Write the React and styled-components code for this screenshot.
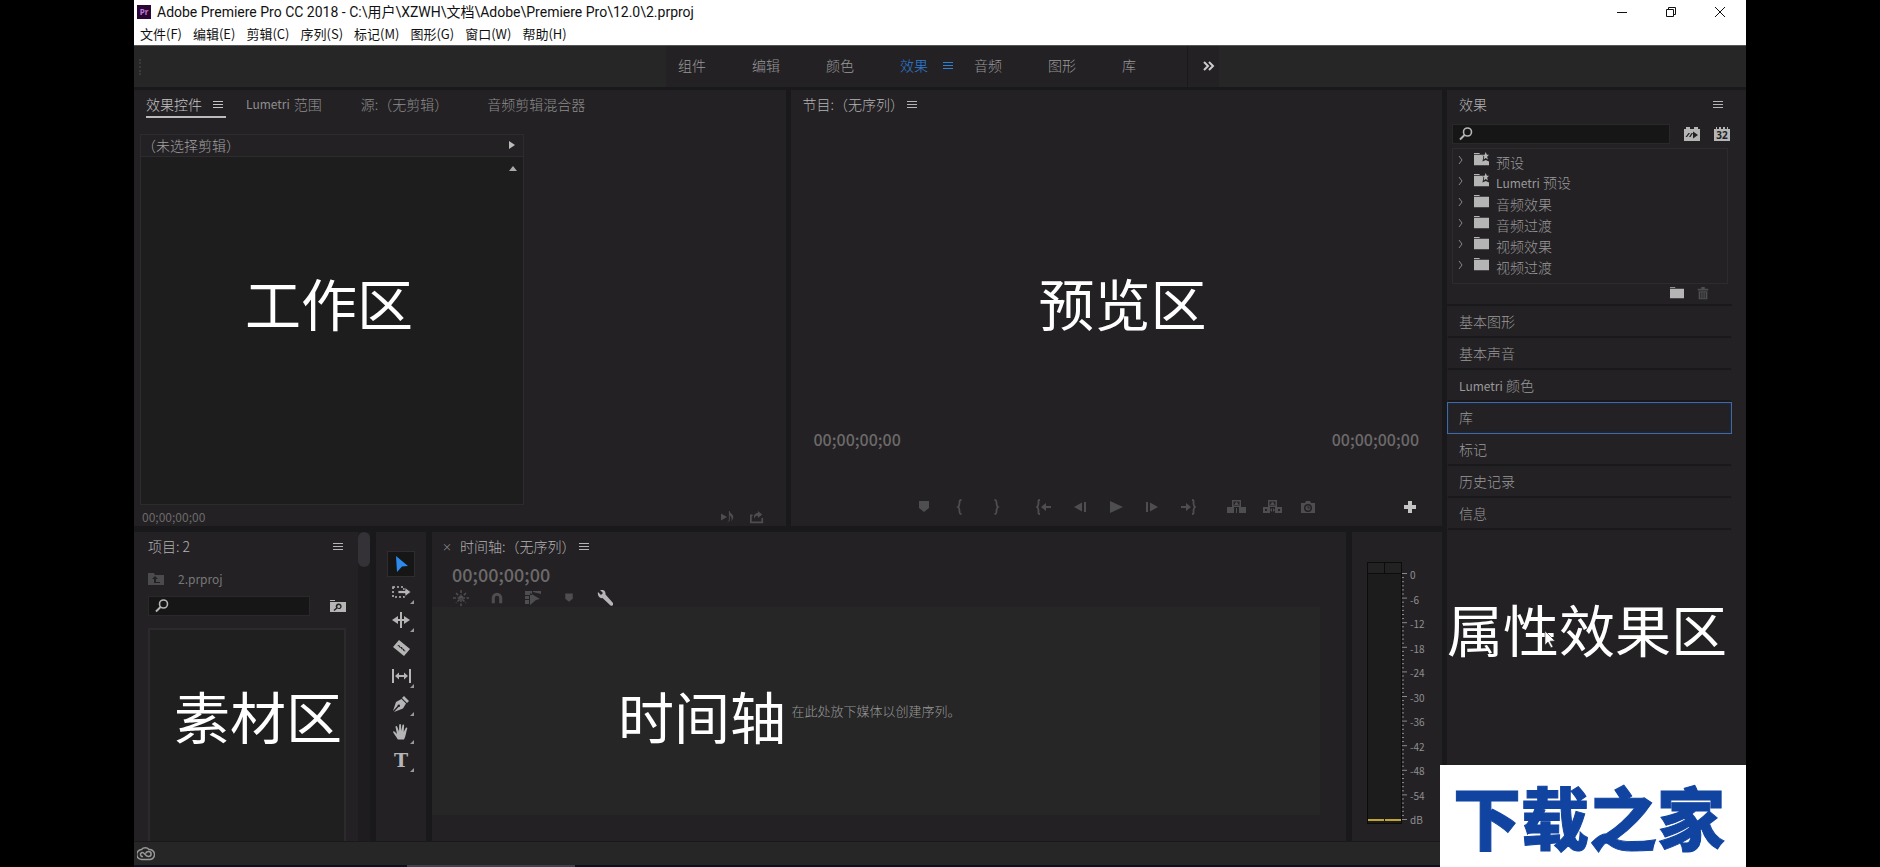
import { useState } from "react";
import styled, { createGlobalStyle } from "styled-components";

const menus = ["文件(F)", "编辑(E)", "剪辑(C)", "序列(S)", "标记(M)", "图形(G)", "窗口(W)", "帮助(H)"];
const workspaces = ["组件", "编辑", "颜色", "效果", "音频", "图形", "库"];
const bins = [
  { name: "预设", preset: true },
  { name: "预设", latin: "Lumetri", preset: true },
  { name: "音频效果" },
  { name: "音频过渡" },
  { name: "视频效果" },
  { name: "视频过渡" },
];
const sections = [
  { name: "基本图形" },
  { name: "基本声音" },
  { name: "颜色", latin: "Lumetri" },
  { name: "库" },
  { name: "标记" },
  { name: "历史记录" },
  { name: "信息" },
];
const levels = ["0", "-6", "-12", "-18", "-24", "-30", "-36", "-42", "-48", "-54", "dB"];

// 16x16 drawings, filled with currentColor
const shapes = {
  menu: <path d="M3 5h10v1H3zM3 8h10v1H3zM3 11h10v1H3z" />,
  search: (
    <g fill="none" stroke="currentColor">
      <circle cx="9.5" cy="6" r="4" strokeWidth="1.6" />
      <path d="M6.5 9L2 13.500" strokeWidth="2" />
    </g>
  ),
  folder: <path d="M0 1h6v1H0zM0 3h16v11H0z" />,
  presetFolder: (
    <>
      <path d="M0 1h6v1H0zM0 3h9l1 2-1 5 3.500-1.500L16 10v4H0z" />
      <path d="M12.500 0l1.200 3H16l-2 2 .8 3-2.300-1.600L10.200 8 11 5 9 3h2.300z" />
    </>
  ),
  folderUp: (
    <path fillRule="evenodd" d="M0 2h6l1 2h9v10H0zM7 5L4 8h2v4h6v-1H8V8h2z" />
  ),
  folderSearch: (
    <path fillRule="evenodd" d="M0 2h5v1H0zM0 4h16v10H0zM8.500 5.500a2.800 2.800 0 0 0-2.400 4.300L3.500 12l1 1 2.800-2.400A2.800 2.800 0 1 0 8.500 5.500zm.3 1.400a1.500 1.500 0 1 1 0 3 1.500 1.500 0 0 1 0-3z" />
  ),
  trash: <path fillRule="evenodd" d="M2 3h4V1h4v2h4v2H2zM3 6h10v9H3zM5 7v7h1V7zM7.500 7v7h1V7zM10 7v7h1V7z" />,
  accel: (
    <path fillRule="evenodd" d="M0 3h2V1h4v2h4V1h4v2h2v12H0zM4.500 7L1.500 11h1.500l3-4zM7.500 7L5 11h1.500l2.500-4zM9 5.500v7l5-3.500z" />
  ),
  marker: <path d="M3 2h10v7l-5 4-5-4z" />,
  inPoint: <path d="M9.500 1C7.500 1 7.500 2 7.500 4s0 3-1.500 4c1.500 1 1.500 2 1.500 4s0 3 2 3" fill="none" stroke="currentColor" strokeWidth="1.800" />,
  outPoint: <path d="M6.500 1c2 0 2 1 2 3s0 3 1.500 4c-1.500 1-1.500 2-1.500 4s0 3-2 3" fill="none" stroke="currentColor" strokeWidth="1.800" />,
  goIn: (
    <>
      <path d="M4 1C2 1 2.500 2 2.500 4s0 3-1.500 4c1.500 1 1.500 2 1.500 4s-.5 3 1.500 3" fill="none" stroke="currentColor" strokeWidth="1.800" />
      <path d="M5 8l5-4v3h5v2h-5v3z" />
    </>
  ),
  goOut: (
    <>
      <path d="M12 1c2 0 1.500 1 1.500 3s0 3 1.500 4c-1.500 1-1.500 2-1.500 4s.5 3-1.500 3" fill="none" stroke="currentColor" strokeWidth="1.800" />
      <path d="M11 8L6 4v3H1v2h5v3z" />
    </>
  ),
  stepBack: <path d="M2 8l8-4.500v9zM12 3h2v10h-2z" />,
  play: <path d="M2 2l13 6-13 6z" />,
  stepOn: <path d="M14 8L6 3.500v9zM2 3h2v10H2z" />,
  lift: (
    <path fillRule="evenodd" d="M5 1h9v7H5zM6.500 2.500v4h6v-4zM9 3h1l2 3H7zM0 8h7v6H0zM12 8h7v6h-7zM9 9h1v5H9z" />
  ),
  extract: (
    <path fillRule="evenodd" d="M5 1h9v7H5zM6.500 2.500v4h6v-4zM9 3h1l2 3H7zM0 8h7v6H0zM2 10v2h2v-2zM12 8h7v6h-7zM15 10v2h2v-2zM7 11l2-2v4zM12 11l-2-2v4z" />
  ),
  camera: (
    <path fillRule="evenodd" d="M1 4h4l1-2h4l1 2h4v10H1zM8 5a4 4 0 1 0 0 8 4 4 0 0 0 0-8zm0 1.500a2.500 2.500 0 1 1 0 5 2.500 2.500 0 0 1 0-5zM7.500 7v2.500H10V8.500H8.500V7z" />
  ),
  plus: <path d="M6 2h4v4h4v4h-4v4H6v-4H2V6h4z" />,
  playAudio: (
    <>
      <path d="M0 4l7 4-7 4z" />
      <path d="M10 1c0 3 4 3 4 7 0 2-2 5-2 5 1-4-1-6-2-7v6c-1 2-3 2-3 2 1-1 2-1 2-3V1z" />
    </>
  ),
  exportIt: (
    <path fillRule="evenodd" d="M0 5h3v2H2v6h11V9h2v6H0zM9 1l5 4-5 4V6.500C7 6.500 5.500 7 5 10 3.500 6 6 3.500 9 3.500z" />
  ),
  select: <path d="M3 0l12 10-6 .5L4 16z" />,
  track: (
    <>
      <path d="M1 3h11v10H1z" fill="none" stroke="currentColor" strokeWidth="1.600" strokeDasharray="2 2" />
      <path d="M6 6.500h7V3.500l6 4.500-6 4.500v-3H6z" stroke="#232124" strokeWidth=".8" />
    </>
  ),
  ripple: <path d="M8 0h2v16H8zM0 8l6-4v3h2v2H6v3zM18 8l-6-4v3h-2v2h2v3z" />,
  razor: (
    <path fillRule="evenodd" d="M6 0l11 9-6 7-11-9zM5 5l1.500.5 1 1.500 1.500 0 .5 1.500 1.500.500.500 1.500 1 .3-.3.700-1.700-.500-.6-1.500-1.400-.3-.6-1.400-1.400-.200-.7-1.400L4.500 6z" />
  ),
  slip: <path d="M0 1h2v14H0zM17 1h2v14h-2zM3 8l4-3.500V7h5V4.500L16 8l-4 3.500V9H7v2.500z" />,
  pen: (
    <path fillRule="evenodd" d="M11 0l5 5-2 2-5-5zM8.500 3L13 7.500l-3 5L1 16l4.500-5a1.300 1.300 0 1 0-1-1L0 15l3-9z" />
  ),
  hand: (
    <path d="M4.500 15C3 12 1 10 0 8c0-1 1.300-1 2 0l2 2-1.500-7c0-1.200 1.500-1.200 1.800 0L6 7.500 6.200 1c.1-1.200 1.700-1.200 1.800 0l.4 6 1-5.700c.3-1.100 1.800-.8 1.700.4L10.700 8l2-4c.6-1 1.900-.4 1.500.7C13 8 13 12 11 15.500H5z" />
  ),
  nest: (
    <path d="M8 0v16M0 8h16M3 3l10 10M13 3L3 13" fill="none" stroke="currentColor" strokeWidth="1.500" strokeDasharray="3 1.500" />
  ),
  magnet: <path d="M2 14V8a6 6 0 0 1 12 0v6h-3.500V8a2.500 2.500 0 0 0-5 0v6z" />,
  linked: <path fillRule="evenodd" d="M0 1h7v4H0zM0 6h4v3H0zM0 10h4v4H0zM8 1h8v3L8 2zM5 3l10 6-4 1-6 5z" />,
  wrench: (
    <path d="M1 2l3 3 2-2-3-3c3-1 6 1 5.500 4.500L16 13c1 2-1 4-3 2L5.500 8C3 9 0 6 1 2z" />
  ),
};

const Icon = ({ name, size = 16, width }) => (
  <svg
    width={width || size}
    height={size}
    viewBox={`0 0 ${width && width > 16 ? width : 16} 16`}
    fill="currentColor"
    aria-hidden="true"
  >
    {shapes[name]}
  </svg>
);

const transport = [
  { icon: "marker", label: "添加标记" },
  { icon: "inPoint", label: "标记入点" },
  { icon: "outPoint", label: "标记出点" },
  { icon: "goIn", label: "转到入点", group: true },
  { icon: "stepBack", label: "后退一帧" },
  { icon: "play", label: "播放" },
  { icon: "stepOn", label: "前进一帧" },
  { icon: "goOut", label: "转到出点" },
  { icon: "lift", label: "提升", w: 19, group: true },
  { icon: "extract", label: "提取", w: 19 },
  { icon: "camera", label: "导出帧" },
];

const tools = [
  { icon: "select", label: "选择工具" },
  { icon: "track", label: "向前选择轨道工具", w: 19, more: true },
  { icon: "ripple", label: "波纹编辑工具", w: 18, more: true },
  { icon: "razor", label: "剃刀工具", w: 17 },
  { icon: "slip", label: "外滑工具", w: 19, more: true },
  { icon: "pen", label: "钢笔工具", more: true },
  { icon: "hand", label: "手形工具", more: true },
  { icon: "type", label: "文字工具", more: true },
];

const App = () => {
  const [workspace, setWorkspace] = useState("效果");
  const [section, setSection] = useState("库");
  const [tool, setTool] = useState("select");

  return (
    <Page>
      <GlobalStyle />
      <Window>
        <TitleBar>
          <Logo>Pr</Logo>
          <Title>Adobe Premiere Pro CC 2018 - C:\用户\XZWH\文档\Adobe\Premiere Pro\12.0\2.prproj</Title>
          <WindowButtons>
            <WindowButton aria-label="最小化">
              <svg width="12" height="12" stroke="#111"><path d="M1 6.500h10" /></svg>
            </WindowButton>
            <WindowButton aria-label="还原">
              <svg width="12" height="12" stroke="#111" fill="none">
                <path d="M1.500 3.500h7v7h-7zM3.500 3.500v-2h7v7h-2" />
              </svg>
            </WindowButton>
            <WindowButton aria-label="关闭">
              <svg width="12" height="12" stroke="#111"><path d="M1 1l10 10M11 1L1 11" /></svg>
            </WindowButton>
          </WindowButtons>
        </TitleBar>
        <MenuBar>
          {menus.map((m) => (
            <MenuItem key={m}>{m}</MenuItem>
          ))}
        </MenuBar>

        <WorkspaceBar>
          <Grip />
          <WorkspaceTabs>
            {workspaces.map((w) => (
              <WorkspaceTab key={w} $active={workspace === w} onClick={() => setWorkspace(w)}>
                {w}
                {workspace === w && <Icon name="menu" />}
              </WorkspaceTab>
            ))}
            <MoreTabs aria-label="更多工作区">
              <svg width="12" height="10" fill="none" stroke="currentColor" strokeWidth="2">
                <path d="M1 1l4 4-4 4M6 1l4 4-4 4" />
              </svg>
            </MoreTabs>
          </WorkspaceTabs>
        </WorkspaceBar>

        <Panels>
          <Main>
            <TopRow>
              <Panel>
                <Tabs>
                  <Tab $active>
                    效果控件 <Icon name="menu" />
                  </Tab>
                  <Tab><Latin>Lumetri</Latin> 范围</Tab>
                  <Tab>源:（无剪辑）</Tab>
                  <Tab>音频剪辑混合器</Tab>
                </Tabs>
                <ClipBox>
                  <ClipHeader>
                    （未选择剪辑）
                    <svg width="6" height="8" fill="#bbb"><path d="M0 0l6 4-6 4z" /></svg>
                  </ClipHeader>
                  <ClipBody>
                    <svg width="8" height="5" fill="#aaa"><path d="M0 5l4-5 4 5z" /></svg>
                  </ClipBody>
                </ClipBox>
                <ClipFooter>
                  <SmallTime>00;00;00;00</SmallTime>
                  <IconButton aria-label="播放音频"><Icon name="playAudio" size={14} /></IconButton>
                  <IconButton aria-label="导出"><Icon name="exportIt" size={14} /></IconButton>
                </ClipFooter>
                <Caption $left={111} $top={172}>工作区</Caption>
              </Panel>

              <Panel>
                <PanelTitle>
                  节目:（无序列）<Icon name="menu" />
                </PanelTitle>
                <Screen />
                <Times>
                  <Time>00;00;00;00</Time>
                  <Time>00;00;00;00</Time>
                </Times>
                <Transport>
                  <TransportButtons>
                    {transport.map((b) => (
                      <TransportButton key={b.icon} $group={b.group} aria-label={b.label}>
                        <Icon name={b.icon} width={b.w} />
                      </TransportButton>
                    ))}
                  </TransportButtons>
                  <AddButton aria-label="按钮编辑器"><Icon name="plus" /></AddButton>
                </Transport>
                <Caption $left={248} $top={172}>预览区</Caption>
              </Panel>
            </TopRow>

            <BottomRow>
              <ProjectPanel>
                <ProjectBody>
                  <ProjectTitle>
                    项目: 2 <Icon name="menu" />
                  </ProjectTitle>
                  <ProjectPath>
                    <Icon name="folderUp" />
                    <Latin>2.prproj</Latin>
                  </ProjectPath>
                  <ProjectSearch>
                    <SearchBox>
                      <Icon name="search" />
                      <input aria-label="搜索项目" />
                    </SearchBox>
                    <IconButton $bright aria-label="创建搜索素材箱"><Icon name="folderSearch" /></IconButton>
                  </ProjectSearch>
                  <Bin />
                </ProjectBody>
                <ScrollTrack><Thumb /></ScrollTrack>
                <Caption $left={40} $top={143}>素材区</Caption>
              </ProjectPanel>

              <ToolPanel>
                {tools.map((t) => (
                  <Tool key={t.icon} aria-label={t.label} $active={tool === t.icon} onClick={() => setTool(t.icon)}>
                    {t.icon === "type" ? <TypeGlyph>T</TypeGlyph> : <Icon name={t.icon} width={t.w} />}
                    {t.more && <Corner />}
                  </Tool>
                ))}
              </ToolPanel>

              <Panel>
                <TimelineTitle>
                  <Close aria-label="关闭时间轴">×</Close>
                  时间轴:（无序列）<Icon name="menu" />
                </TimelineTitle>
                <TimelineTime>00;00;00;00</TimelineTime>
                <TimelineTools>
                  <IconButton aria-label="嵌套"><Icon name="nest" /></IconButton>
                  <IconButton aria-label="对齐"><Icon name="magnet" size={14} /></IconButton>
                  <IconButton aria-label="链接选择项"><Icon name="linked" /></IconButton>
                  <IconButton aria-label="添加标记"><Icon name="marker" size={12} /></IconButton>
                  <IconButton $bright aria-label="时间轴显示设置"><Icon name="wrench" /></IconButton>
                </TimelineTools>
                <DropZone>在此处放下媒体以创建序列。</DropZone>
                <Caption $left={186} $top={143}>时间轴</Caption>
              </Panel>

              <MeterPanel>
                <Meter>
                  <MeterHead><i /><i /></MeterHead>
                  <MeterFoot><i /><i /></MeterFoot>
                </Meter>
                <svg width="6" height="248" stroke="#8a8a8a" aria-hidden="true">
                  {Array.from({ length: 61 }, (_, i) => (
                    <path key={i} d={`M0 ${i * 4.1 + 0.5}h${i % 6 === 0 ? 5 : 2}`} />
                  ))}
                </svg>
                <Levels>
                  {levels.map((l) => (
                    <span key={l}>{l}</span>
                  ))}
                </Levels>
              </MeterPanel>
            </BottomRow>
          </Main>

          <Side>
            <Effects>
              <SideTitle>
                效果 <Icon name="menu" />
              </SideTitle>
              <EffectSearch>
                <SearchBox>
                  <Icon name="search" />
                  <input aria-label="搜索效果" />
                </SearchBox>
                <IconButton $bright aria-label="加速效果"><Icon name="accel" /></IconButton>
                <Badge aria-label="32 位颜色">32</Badge>
              </EffectSearch>
              <BinList>
                {bins.map((b) => (
                  <BinRow key={(b.latin || "") + b.name}>
                    <svg width="5" height="10" fill="none" stroke="#888"><path d="M1 1l3 4-3 4" /></svg>
                    <Icon name={b.preset ? "presetFolder" : "folder"} size={15} />
                    <BinName>
                      {b.latin && <Latin>{b.latin}</Latin>} {b.name}
                    </BinName>
                  </BinRow>
                ))}
              </BinList>
              <BinFooter>
                <IconButton $bright aria-label="新建自定义素材箱"><Icon name="folder" size={14} /></IconButton>
                <IconButton aria-label="删除"><Icon name="trash" size={14} /></IconButton>
              </BinFooter>
            </Effects>
            {sections.map((s) => (
              <Section key={s.name} $active={section === s.name} onClick={() => setSection(s.name)}>
                {s.latin && <Latin>{s.latin}</Latin>} {s.name}
              </Section>
            ))}
            <Caption $left={0} $top={498}>属性效果区</Caption>
            <Pointer width="12" height="18" fill="#fff" stroke="#333" strokeWidth=".6">
              <path d="M1 1l10 10-5 .2 3 5.500-2 1-3-5.700-3 3z" />
            </Pointer>
          </Side>
        </Panels>

        <StatusBar>
          <svg width="18" height="14" fill="none" stroke="#999" strokeWidth="1.500" aria-hidden="true">
            <path d="M5 12.500a5 5 0 0 1-.5-10A5 5 0 0 1 12 2.500a5 5 0 0 1 1 10zM6 9.500c-3 .5-3.500-4-.5-4 2 0 3 4 6 4 3.500 0 3.500-5 0-5-2 0-2.500 1-3 2" />
          </svg>
        </StatusBar>
        <TaskStrip><i /></TaskStrip>
        <Watermark>下载之家</Watermark>
      </Window>
    </Page>
  );
};

export default App;

const GlobalStyle = createGlobalStyle`
  * { box-sizing: border-box; }
  body {
    margin: 0;
    background: #000;
    font-family: "Noto Sans CJK SC", sans-serif;
  }
  button {
    font-family: inherit;
    border: none;
    background: none;
    padding: 0;
    cursor: pointer;
  }
  svg { flex: none; display: block; }
`;

const Page = styled.div`
  padding: 0 134px;
  background: #000;
`;
const Window = styled.div`
  position: relative;
  display: flex;
  flex-direction: column;
  min-height: 100vh;
  background: #19181a;
  color: #a2a2a2;
  font-size: 14px;
  font-weight: 300;
  line-height: 20px;
`;
const TitleBar = styled.header`
  display: flex;
  align-items: center;
  height: 24px;
  padding-left: 3px;
  background: #fff;
`;
const Logo = styled.span`
  width: 14px;
  height: 14px;
  margin-right: 6px;
  background: #2a0634;
  color: #c678dd;
  font: 700 8px/14px "Noto Sans", sans-serif;
  text-align: center;
`;
const Title = styled.h1`
  flex: 1;
  margin: 0;
  color: #111;
  font: 400 14px/22px Roboto, "Noto Sans CJK SC", sans-serif;
`;
const WindowButtons = styled.div`
  display: flex;
  padding-right: 2px;
`;
const WindowButton = styled.button`
  display: flex;
  justify-content: center;
  align-items: center;
  width: 49px;
  height: 24px;
`;
const MenuBar = styled.nav`
  display: flex;
  gap: 11px;
  height: 21px;
  padding-left: 6px;
  background: #fff;
`;
const MenuItem = styled.button`
  height: 20px;
  color: #111;
  font-size: 13px;
  font-weight: 400;
  line-height: 20px;
`;

const WorkspaceBar = styled.div`
  position: relative;
  display: flex;
  justify-content: center;
  height: 42px;
  margin-bottom: 3px;
  padding-left: 5px;
  border-top: 1px solid #555;
  background: #262626;
`;
const Grip = styled.i`
  position: absolute;
  left: 5px;
  top: 13px;
  height: 16px;
  border-left: 2px dotted #3a3a3a;
`;
const WorkspaceTabs = styled.div`
  display: flex;
  padding-left: 12px;
  background: #232124;
`;
const WorkspaceTab = styled.button`
  display: flex;
  align-items: center;
  gap: 12px;
  width: 74px;
  padding-bottom: 4px;
  color: ${({ $active }) => ($active ? "#2d7fd8" : "#999")};
  font-size: 14px;
  font-weight: 300;
`;
const MoreTabs = styled.button`
  display: flex;
  justify-content: center;
  align-items: center;
  width: 32px;
  margin-left: -9px;
  padding: 0 0 2px 10px;
  border-left: 1px solid #19181a;
  color: #ccc;
`;

const Panels = styled.main`
  flex: 1;
  display: grid;
  grid-template-columns: minmax(0, 1fr) 299px;
  gap: 5px;
`;
const Main = styled.div`
  display: grid;
  grid-template-rows: 437fr 309fr;
  gap: 6px;
`;
const TopRow = styled.div`
  display: grid;
  grid-template-columns: 1fr 1fr;
  gap: 5px;
`;
const BottomRow = styled.div`
  display: grid;
  grid-template-columns: 236px 50px minmax(0, 1fr) 90px;
  gap: 6px;
`;
const Panel = styled.section`
  position: relative;
  display: flex;
  flex-direction: column;
  background: #232124;
`;
// large names laid over the panels
const Caption = styled.strong`
  position: absolute;
  left: ${({ $left }) => $left}px;
  top: ${({ $top }) => $top}px;
  color: #fff;
  font-size: 56px;
  font-weight: 400;
  line-height: 80px;
  white-space: nowrap;
  pointer-events: none;
`;
const Latin = styled.span`
  font-size: 12px;
  font-weight: 400;
`;

const Tabs = styled.div`
  display: flex;
  height: 44px;
  padding: 3px 12px 0;
`;
const Tab = styled.button`
  display: flex;
  align-items: center;
  align-self: flex-start;
  gap: ${({ $active }) => ($active ? "8px" : "4px")};
  height: 25px;
  margin-right: ${({ $active }) => ($active ? "20px" : "39px")};
  padding-bottom: 2px;
  border-bottom: 2px solid ${({ $active }) => ($active ? "#bbb" : "transparent")};
  color: ${({ $active }) => ($active ? "#c4c4c4" : "#8e8e8e")};
  font-size: 14px;
  font-weight: 300;
`;
const ClipBox = styled.div`
  flex: 1;
  display: flex;
  flex-direction: column;
  width: 59%;
  margin-left: 6px;
  border: 1px solid #2d2b2e;
`;
const ClipHeader = styled.div`
  display: flex;
  justify-content: space-between;
  align-items: center;
  height: 22px;
  padding: 0 8px 2px 1px;
  border-bottom: 1px solid #2d2b2e;
`;
const ClipBody = styled.div`
  flex: 1;
  display: flex;
  justify-content: flex-end;
  padding: 9px 6px;
  background: #1d1d1d;
`;
const ClipFooter = styled.div`
  display: flex;
  align-items: center;
  gap: 13px;
  height: 21px;
  padding: 2px 21px 0 8px;
`;
const SmallTime = styled.span`
  flex: 1;
  color: #6c6a6a;
  font-size: 12px;
  font-weight: 400;
`;
const IconButton = styled.button`
  display: flex;
  justify-content: center;
  align-items: center;
  min-width: 16px;
  height: 16px;
  color: ${({ $bright }) => ($bright ? "#b5b5b5" : "#4e4d4f")};
`;

const PanelTitle = styled.h2`
  display: flex;
  align-items: center;
  height: 30px;
  margin: 0;
  padding: 0 0 2px 12px;
  color: #b4b4b4;
  font-size: 14px;
  font-weight: 300;
`;
const Screen = styled.div`
  flex: 1;
`;
const Times = styled.div`
  display: flex;
  justify-content: space-between;
  padding: 0 23px 39px;
`;
const Time = styled.span`
  color: #6c6a6a;
  font-size: 16px;
  font-weight: 500;
`;
const Transport = styled.div`
  display: flex;
  align-items: center;
  height: 38px;
  padding-right: 24px;
`;
const TransportButtons = styled.div`
  flex: 1;
  display: flex;
  justify-content: center;
  padding-left: 40px;
`;
const TransportButton = styled.button`
  display: flex;
  justify-content: center;
  width: 36px;
  margin-left: ${({ $group }) => ($group ? "12px" : "0")};
  color: #4e4d4f;
`;
const AddButton = styled(IconButton)`
  color: #c4c4c4;
`;

const ProjectPanel = styled(Panel)`
  flex-direction: row;
`;
const ProjectBody = styled.div`
  flex: 1;
  display: flex;
  flex-direction: column;
  min-width: 0;
  padding: 0 12px 0 14px;
`;
const ProjectTitle = styled(PanelTitle)`
  justify-content: space-between;
  padding-left: 0;
`;
const ProjectPath = styled.div`
  display: flex;
  align-items: center;
  gap: 14px;
  height: 34px;
  color: #777;

  svg { color: #4b4a4c; }
`;
const SearchBox = styled.label`
  flex: 1;
  display: flex;
  align-items: center;
  min-width: 0;
  height: 20px;
  padding-left: 5px;
  border: 1px solid #2a282b;
  background: #161616;
  color: #b5b5b5;

  input {
    flex: 1;
    min-width: 0;
    border: none;
    outline: none;
    background: transparent;
    color: #ccc;
    font-size: 12px;
  }
`;
const ProjectSearch = styled.div`
  display: flex;
  align-items: center;
  gap: 20px;
`;
const Bin = styled.div`
  flex: 1;
  margin-top: 12px;
  border: 2px solid #2c2a2d;
  border-bottom: none;
  background: #1f1f1f;
`;
const ScrollTrack = styled.div`
  flex: none;
  width: 12px;
  background: #1e1c1f;
`;
const Thumb = styled.div`
  height: 35px;
  border-radius: 6px;
  background: #343236;
`;

const ToolPanel = styled(Panel)`
  align-items: center;
  gap: 2px;
  padding-top: 19px;
`;
const Tool = styled.button`
  position: relative;
  display: flex;
  justify-content: center;
  align-items: center;
  width: 28px;
  height: 26px;
  border: 1px solid ${({ $active }) => ($active ? "#2e2c2f" : "transparent")};
  background: ${({ $active }) => ($active ? "#161616" : "none")};
  color: ${({ $active }) => ($active ? "#2d8ceb" : "#b5b5b5")};
`;
const TypeGlyph = styled.span`
  font: 700 19px/26px "DejaVu Serif", serif;
`;
const Corner = styled.i`
  position: absolute;
  right: 0;
  bottom: 0;
  border-left: 4px solid transparent;
  border-bottom: 4px solid #999;
`;

const TimelineTitle = styled(PanelTitle)`
  padding-left: 10px;
`;
const Close = styled.button`
  width: 18px;
  color: #888;
  font-size: 10px;
  text-align: left;
`;
const TimelineTime = styled(Time)`
  padding-left: 20px;
  font-size: 18px;
  line-height: 24px;
`;
const TimelineTools = styled.div`
  display: flex;
  gap: 20px;
  height: 21px;
  padding: 4px 21px 0;
`;
const DropZone = styled.div`
  flex: 1;
  display: flex;
  justify-content: center;
  align-items: center;
  margin: 0 26px 26px 0;
  background: #262626;
  color: #999;
  font-size: 13px;
`;

const MeterPanel = styled(Panel)`
  flex-direction: row;
  align-items: flex-start;
  padding: 30px 0 0 15px;

  > svg { margin-top: 11px; }
`;
const Meter = styled.div`
  display: flex;
  flex-direction: column;
  justify-content: space-between;
  width: 35px;
  height: 262px;
  border: 1px solid #0c0c0c;
  background: #1c1c1c;
`;
const MeterHead = styled.div`
  display: grid;
  grid-template-columns: 1fr 1fr;
  gap: 1px;
  height: 11px;
  border-bottom: 1px solid #0c0c0c;
  background: #0c0c0c;

  i { background: #222; }
`;
const MeterFoot = styled(MeterHead)`
  height: 4px;
  border-bottom: 2px solid #1c1c1c;
  background: none;

  i { background: #c2a530; }
`;
const Levels = styled.div`
  display: flex;
  flex-direction: column;
  justify-content: space-between;
  height: 257px;
  margin-top: 7px;
  padding-left: 2px;
  color: #8f8f8f;
  font-size: 10px;
  font-weight: 400;
  line-height: 12px;
`;

const Side = styled.aside`
  position: relative;
  padding-right: 14px;
  background: #232124;
`;
const Effects = styled.div`
  height: 216px;
  border-bottom: 2px solid #19181a;
`;
const SideTitle = styled(PanelTitle)`
  justify-content: space-between;
  padding-right: 6px;
`;
const EffectSearch = styled.div`
  display: flex;
  align-items: center;
  gap: 14px;
  height: 28px;
  padding: 0 2px 0 5px;
`;
const Badge = styled.button`
  width: 16px;
  height: 14px;
  border-top: 2px dotted #232124;
  background: #b5b5b5;
  color: #232124;
  font: 700 10px/11px "Noto Sans", sans-serif;
`;
const BinList = styled.ul`
  height: 136px;
  margin: 0 4px 0 5px;
  padding: 0 0 0 5px;
  border: 1px solid #2d2b2e;
  list-style: none;
`;
const BinRow = styled.li`
  display: flex;
  align-items: center;
  gap: 11px;
  height: 21px;
  color: #b5b5b5;
`;
const BinName = styled.span`
  margin-left: -4px;
  padding-top: 4px;
  color: #999;
`;
const BinFooter = styled.div`
  display: flex;
  justify-content: flex-end;
  gap: 10px;
  padding: 1px 21px 0 0;
`;
const Section = styled.button`
  display: block;
  width: 100%;
  height: 32px;
  padding: 0 11px 2px;
  border: 1px solid transparent;
  border-color: ${({ $active }) => ($active ? "#4468a0" : "transparent transparent #19181a")};
  box-shadow: ${({ $active }) => ($active ? "inset 0 0 3px #16305a" : "inset 0 -1px #19181a")};
  color: #999;
  font-size: 14px;
  font-weight: 300;
  text-align: left;
`;
const Pointer = styled.svg`
  position: absolute;
  left: 97px;
  top: 540px;
`;

const StatusBar = styled.footer`
  display: flex;
  align-items: center;
  height: 23px;
  margin-top: 1px;
  padding-left: 3px;
  background: #262626;
`;
const TaskStrip = styled.div`
  height: 2px;
  padding-left: 273px;
  background: #06121f;

  i {
    display: block;
    width: 168px;
    height: 2px;
    background: #3a444e;
  }
`;
const Watermark = styled.div`
  position: absolute;
  right: 0;
  bottom: 0;
  width: 306px;
  height: 102px;
  padding-left: 13px;
  background: #fff;
  color: #1144a0;
  font-size: 68px;
  font-weight: 900;
  line-height: 102px;
  white-space: nowrap;
  -webkit-text-stroke: 1px #1144a0;
`;
